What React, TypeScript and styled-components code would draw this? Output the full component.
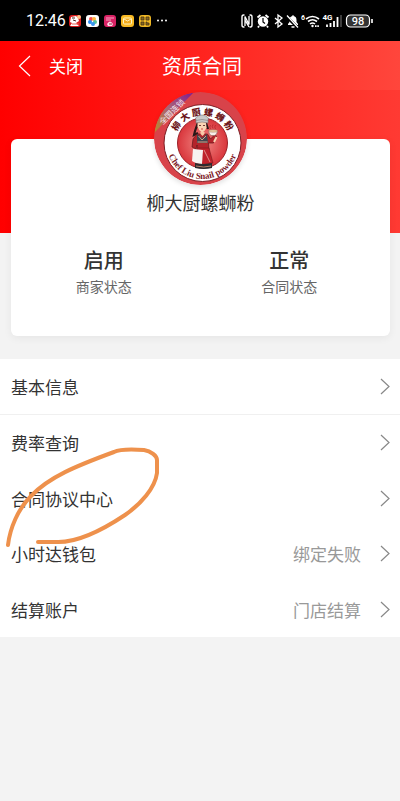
import React from "react";
import styled, { createGlobalStyle } from "styled-components";

const GlobalStyle = createGlobalStyle`
  * { box-sizing: border-box; }
  body {
    margin: 0;
    background: #f3f3f3;
    color: #333;
    font-family: "Noto Sans CJK SC", "Noto Sans", sans-serif;
  }
  button { font: inherit; color: inherit; border: 0; background: none; padding: 0; cursor: pointer; }
`;

const StatusBar = styled.div`
  display: flex;
  align-items: center;
  justify-content: space-between;
  height: 41px;
  padding: 0 27px 0 26px;
  background: #000;
  color: #fff;
`;

const StatusGroup = styled.div`
  display: flex;
  align-items: center;
  gap: 3px;
`;

const Clock = styled.time`
  font: 16px/24px Roboto, sans-serif;
`;

const Hero = styled.div`
  background: linear-gradient(90deg, #ff0000, #ff3a33);
  height: 192px;
`;

const TitleBar = styled.header`
  display: grid;
  grid-template-columns: 1fr auto 1fr;
  align-items: center;
  height: 49px;
  padding: 0 14px 0 18px;
  background: linear-gradient(90deg, #ff0000, #ff463c);
  color: #fff;
`;

const CloseButton = styled.button`
  display: flex;
  align-items: center;
  gap: 18px;
  font-size: 17px;
  line-height: 24px;
`;

const Title = styled.h1`
  margin: 0;
  font-size: 20px;
  line-height: 28px;
  font-weight: 400;
`;

const Card = styled.section`
  display: flex;
  flex-direction: column;
  align-items: center;
  margin: -94px 10px 23px 11px;
  padding-bottom: 39px;
  border-radius: 6px;
  background: #fff;
  box-shadow: 0 2px 8px rgba(0, 0, 0, 0.06);
`;

const Avatar = styled.svg`
  display: block;
  margin-top: -47px;
  border-radius: 50%;
  box-shadow: 0 2px 5px rgba(0, 0, 0, 0.12);
`;

const ShopName = styled.h2`
  margin: 4px 0 30px;
  font-size: 18px;
  line-height: 26px;
  font-weight: 400;
`;

const Stats = styled.dl`
  display: grid;
  grid-template-columns: 1fr 1fr;
  width: 100%;
  margin: 0;
  padding: 0 8px 0 0;
`;

const Stat = styled.div`
  display: flex;
  flex-direction: column-reverse;
  align-items: center;
`;

const StatLabel = styled.dt`
  font-size: 14px;
  line-height: 22px;
  color: #666;
`;

const StatValue = styled.dd`
  margin: 0;
  font-size: 20px;
  line-height: 30px;
  font-weight: 500;
`;

const Group = styled.div<{ $divided?: boolean }>`
  display: grid;
  grid-auto-rows: 1fr;
  min-height: ${(p) => (p.$divided ? 56 : 222)}px;
  background: #fff;
  border-bottom: ${(p) => (p.$divided ? "1px solid #f0f0f0" : "0")};
`;

const Menu = styled.nav`
  position: relative;
`;

const Row = styled.button`
  display: flex;
  align-items: center;
  width: 100%;
  min-height: 55px;
  padding: 0 10px 0 11px;
  font-size: 17px;
  line-height: 25px;
  text-align: left;
`;

const RowLabel = styled.span`
  flex: 1;
`;

const RowValue = styled.span`
  margin-right: 19px;
  color: #999;
`;

const PenMark = styled.svg`
  position: absolute;
  left: 0;
  top: 81px;
  pointer-events: none;
`;

const BackIcon = () => (
  <svg width="13" height="22" viewBox="0 0 13 22" fill="none" stroke="#fff" strokeWidth="1.2" aria-hidden="true">
    <path d="M12 1 1.5 11 12 21" />
  </svg>
);

const Arrow = () => (
  <svg width="10" height="17" viewBox="0 0 10 17" fill="none" stroke="#888" strokeWidth="1.2" aria-hidden="true">
    <path d="M1 1 9 8.5 1 16" />
  </svg>
);

const Notifications = () => (
  <svg width="99" height="14" viewBox="0 0 99 14" aria-hidden="true">
    <rect x="0" y="1" width="12" height="12" rx="3" fill="#d91c1d" />
    <path d="M1 8 2 3l5-1 2 2 1 3-3 2 3 3H1l2-3Z" fill="#fff" />
    <circle cx="10" cy="3" r="2" fill="#ffc38a" />
    <path d="M3 4h3M4 6l3 1" stroke="#4b2422" />
    <path d="M3 10h7" stroke="#e65c55" />
    <rect x="17" y="1" width="13" height="12" rx="3" fill="#fff" />
    <circle cx="22" cy="5" r="2" fill="#f54d4f" />
    <circle cx="25" cy="5" r="2" fill="#ffb43c" />
    <circle cx="26" cy="8" r="2" fill="#55c59a" />
    <circle cx="24" cy="10" r="2" fill="#3995ee" />
    <circle cx="21" cy="8" r="2" fill="#288af1" />
    <rect x="35" y="1" width="12" height="12" rx="3" fill="#d92365" />
    <path d="M37 4h8M37 6h5" stroke="#f6a7c4" />
    <path d="M38 10q3-5 6 0l-1 2h-4Z" fill="#ffdce7" />
    <path d="M40 10h3" stroke="#902246" />
    <rect x="52" y="1" width="13" height="12" rx="3" fill="#f8b923" />
    <rect x="54.500" y="4" width="8" height="6" rx="1" fill="#f3a91b" stroke="#fff4be" />
    <path d="m55 5 3.5 2L62 5" fill="none" stroke="#fff4be" />
    <rect x="70" y="1" width="12" height="12" rx="3" fill="#efb725" />
    <path d="M72 3h3v3h-3zM77 3h3v3h-3zM72 8h3v3h-3zM77 8h1v1h2v2h-3z" fill="#8a671d" stroke="#47351a" strokeWidth=".8" />
    <g fill="#fff"><circle cx="89" cy="6.5" r="1" /><circle cx="93" cy="6.5" r="1" /><circle cx="97" cy="6.5" r="1" /></g>
  </svg>
);

const SystemIcons = () => (
  <svg width="132" height="16" viewBox="0 0 132 16" fill="none" stroke="#fff" role="img" aria-label="98%">
    <path d="M3.500 2H2.500Q1 2 1 4v8q0 2 1.500 2h1M8.500 2h1Q11 2 11 4v8q0 2-1.500 2h-1" strokeWidth="1.4" />
    <path d="M4 13V3.500l4 8V3M4 7l4 7" strokeWidth="1.3" />
    <circle cx="22" cy="8.5" r="5.200" fill="#fff" stroke="none" />
    <path d="m16.500 4.500 3-2.500M27.500 4.500l-3-2.500M18 13l-1 1.500M26 13l1 1.500" strokeWidth="1.8" />
    <path d="M22 5v4l2 1.500" stroke="#000" strokeWidth="1.2" />
    <path d="m34 5 7 6-4 3V2l4 3-7 6" strokeWidth="1.3" />
    <path d="M47 12V11l1.500-2V7q0-3.500 3-4V2h1v1q3 .5 3 4v2l1.500 2v1Z" fill="#fff" stroke="none" />
    <path d="m45 3 12 12" stroke="#000" strokeWidth="3" />
    <path d="m46 2.500 11 12M50.500 14h3" strokeWidth="1.3" />
    <text x="60" y="7" fontSize="7" fontFamily="Roboto" fontWeight="700" fill="#fff" stroke="none">6</text>
    <path d="M65 6q6.500-5 13 0M67 8.500q4.500-3.500 9 0M69 11q2.500-2 5 0" strokeWidth="1.6" />
    <circle cx="71.500" cy="13" r="1.200" fill="#fff" stroke="none" />
    <path d="M74 13.200h4" strokeWidth="1.800" strokeDasharray="1.6 .7" />
    <text x="81.500" y="7" fontSize="8" fontFamily="Roboto" fontWeight="700" fill="#fff" stroke="none">4G</text>
    <path d="M86 14v-2.500M89.500 14v-4M93 14V8M96.500 14V4" strokeWidth="1.800" />
    <path d="M100 14V2" stroke="#444" strokeWidth="1.800" />
    <rect x="105.500" y="2" width="23" height="12" rx="4" fill="#333" strokeWidth="1.200" />
    <path d="M131 6v4" strokeWidth="1.600" />
    <text x="117" y="12" textAnchor="middle" fontSize="11" fontFamily="Roboto" fontWeight="500" fill="#fff" stroke="none">98</text>
  </svg>
);

const ShopLogo = () => (
  <Avatar width="93" height="93" viewBox="0 0 93 93" role="img" aria-label="柳大厨螺蛳粉">
    <defs>
      <radialGradient id="red"><stop offset="0" stopColor="#f28a86" /><stop offset="1" stopColor="#d9363c" /></radialGradient>
      <linearGradient id="ribbon" x1="0" y1="1" x2="1" y2="0"><stop stopColor="#b98a2c" /><stop offset=".5" stopColor="#aa6376" /><stop offset="1" stopColor="#7f1790" /></linearGradient>
      <clipPath id="disc"><circle cx="46.500" cy="46.500" r="46.500" /></clipPath>
      <path id="upper" d="M20.500 51a28 28 0 1 1 56 0" />
      <path id="lower" d="M12.500 51a36 36 0 0 0 72 0" />
    </defs>
    <g clipPath="url(#disc)">
      <rect width="93" height="93" fill="#d8434a" />
      <circle cx="48.500" cy="51" r="38.500" fill="#fff" stroke="#7d1f25" strokeWidth="1" />
      <circle cx="48.500" cy="51" r="25" fill="url(#red)" stroke="#9b2228" strokeWidth="1" />
      <path d="M0 0h40L0 41Z" fill="url(#ribbon)" />
    </g>
    <text x="20" y="22" transform="rotate(-45 20 22)" textAnchor="middle" fontSize="8" fill="#f4e6ee">全国连锁</text>
    <text fontSize="9" fontWeight="900" fill="#6d1519" fontFamily="Noto Sans CJK SC"><textPath href="#upper" startOffset="50%" textAnchor="middle">柳 大 厨 螺 蛳 粉</textPath></text>
    <text fontSize="9" fontWeight="700" fill="#7d1a1f" fontFamily="Liberation Serif"><textPath href="#lower" startOffset="50%" textAnchor="middle">Chef Liu Snail powder</textPath></text>
    <path d="M44 31q-2 5-3 8l-1 4 4-2M52 31l2 6" stroke="#2a1818" strokeWidth="2.200" fill="none" />
    <path d="M43.500 30.500q4-2 8.500 0l.5 5q-1.500 4-4.500 5-3.500-2-4.500-6Z" fill="#fbd3b4" />
    <path d="M45 33.500h2M49 33.500h2" stroke="#4d1718" strokeWidth=".8" />
    <path d="M47 37h2" stroke="#c3272d" strokeWidth=".8" />
    <path d="M42 28l-.5-2q3-3 6.500-3t6.500 3l-.5 2v3q-6-2-12 0Z" fill="#c9c9c9" stroke="#777" strokeWidth=".6" />
    <path d="M42 28.500q6-2 12 0" stroke="#8b8b8b" fill="none" strokeWidth=".8" />
    <path d="m43 42-4 5-1 8 4 2 1-4 .5 5H55l-.5-7 5 0 3-7-2-1-4 4-3-5Z" fill="#b3242b" stroke="#621519" strokeWidth=".7" />
    <path d="m43 42 5 4 5-4 1 9H43Z" fill="#404650" />
    <path d="m44.500 44 3.500 4 4-4M43.500 50h10" stroke="#dba184" fill="none" />
    <path d="M46.500 40v2l2 2 2-2v-2Z" fill="#f8c9a8" />
    <path d="M43 56h12l4 15q-9 3-18 0Z" fill="#bf222b" stroke="#7c171c" strokeWidth=".6" />
    <path d="M50 58l6 12" stroke="#e9aba3" strokeWidth=".8" />
    <path d="m39 57 10 1-1 14q-6 0-10-3Z" fill="#f7f3f1" />
    <path d="M41 71q8 2 17 0v5q-8 2-17 0Z" fill="#2e2b2f" />
    <path d="M42 74q8 2 15 0" stroke="#b9826a" fill="none" />
    <path d="m60 50 2.500-5" stroke="#fbd3b4" strokeWidth="2" />
    <path d="M54.500 39h9q-.5 4-3 4.500h-3q-2.500-.5-3-4.500Z" fill="#f7efe9" stroke="#8c5955" strokeWidth=".6" />
    <ellipse cx="59" cy="39" rx="4.500" ry="1.200" fill="#efd3a4" stroke="#8c5955" strokeWidth=".4" />
    <path d="M56.500 37q-1.500-2 0-4M59 36.500q-1.500-2 0-4M61.500 37q-1.500-2 0-4" fill="none" stroke="#b02028" strokeWidth=".7" />
  </Avatar>
);

const stats = [
  { value: "启用", label: "商家状态" },
  { value: "正常", label: "合同状态" },
];

const rows = [
  { label: "费率查询" },
  { label: "合同协议中心" },
  { label: "小时达钱包", value: "绑定失败" },
  { label: "结算账户", value: "门店结算" },
];

const MenuRow = ({ label, value }: { label: string; value?: string }) => (
  <Row type="button">
    <RowLabel>{label}</RowLabel>
    {value && <RowValue>{value}</RowValue>}
    <Arrow />
  </Row>
);

export default function App() {
  return (
    <>
      <GlobalStyle />
      <StatusBar>
        <StatusGroup>
          <Clock>12:46</Clock>
          <Notifications />
        </StatusGroup>
        <SystemIcons />
      </StatusBar>
      <Hero>
        <TitleBar>
          <CloseButton type="button"><BackIcon />关闭</CloseButton>
          <Title>资质合同</Title>
        </TitleBar>
      </Hero>
      <main>
        <Card>
          <ShopLogo />
          <ShopName>柳大厨螺蛳粉</ShopName>
          <Stats>
            {stats.map((s) => (
              <Stat key={s.label}><StatLabel>{s.label}</StatLabel><StatValue>{s.value}</StatValue></Stat>
            ))}
          </Stats>
        </Card>
        <Menu>
          <Group $divided><MenuRow label="基本信息" /></Group>
          <Group>{rows.map((r) => <MenuRow key={r.label} {...r} />)}</Group>
          <PenMark width="170" height="112" viewBox="0 0 170 112" fill="none" stroke="#ee914c" strokeWidth="4" strokeLinecap="round" strokeLinejoin="round" aria-hidden="true">
            <path d="M8 105C10 88 18 69 31 56 49 37 76 26 114 12 120 9 130 9 144 10 151 11 157 16 157 20V33C155 48 141 64 125 75 101 91 77 103 56 102H38" />
          </PenMark>
        </Menu>
      </main>
    </>
  );
}
